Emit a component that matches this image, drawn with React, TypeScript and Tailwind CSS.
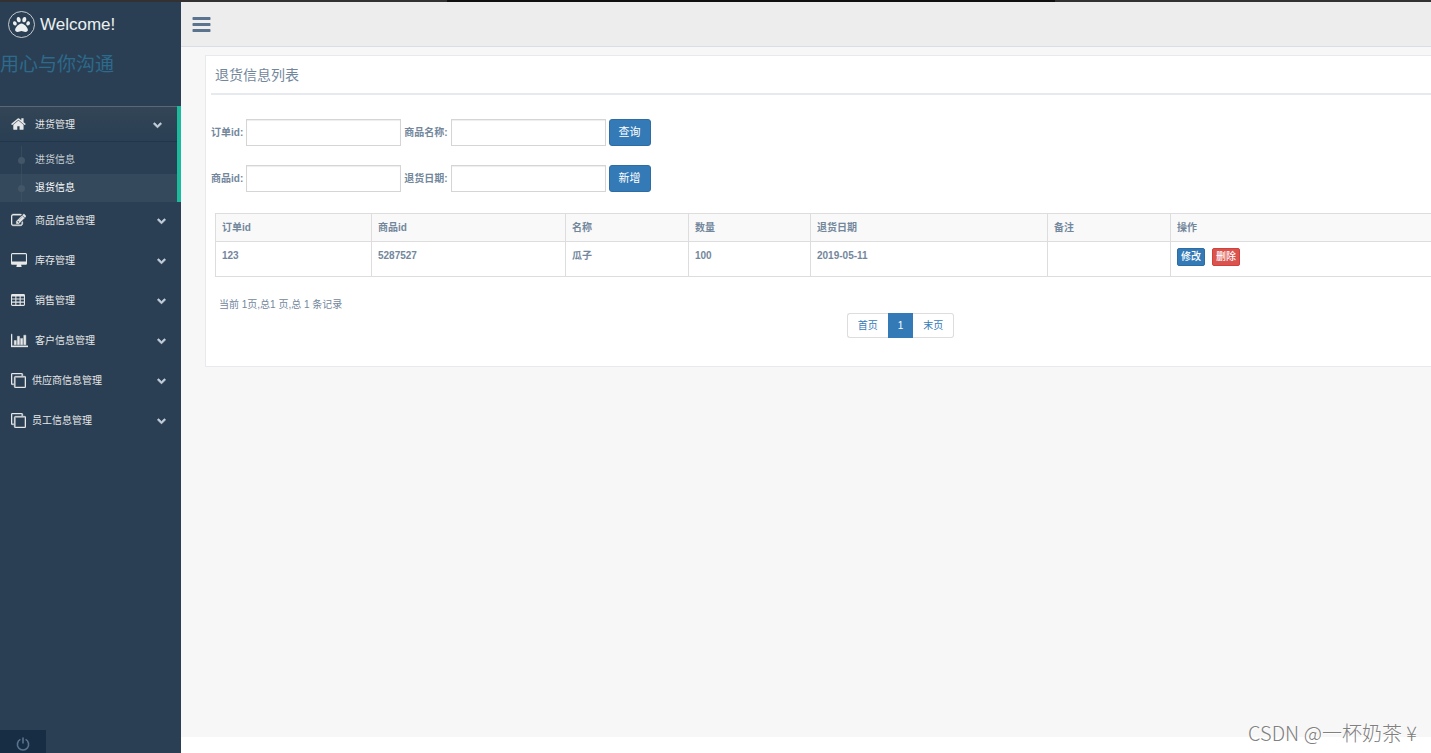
import { FaPaw } from "react-icons/fa";

const paths = {
  home: "M1408 992v480q0 26-19 45t-45 19h-384v-384h-256v384h-384q-26 0-45-19t-19-45v-480q0-1 .5-3t.5-3l575-474 575 474q1 2 1 6zm223-69l-62 74q-8 9-21 11h-3q-13 0-21-7l-692-577-692 577q-12 8-24 7-13-2-21-11l-62-74q-8-10-7-23.5t11-21.5l719-599q32-26 76-26t76 26l244 204v-195q0-14 9-23t23-9h192q14 0 23 9t9 23v408l219 182q10 8 11 21.5t-7 23.5z",
  edit: "M888 1184l116-116-152-152-116 116v56h96v96h56zm440-720q-16-16-33 1l-350 350q-17 17-1 33t33-1l350-350q17-17 1-33zm80 594v190q0 119-84.5 203.5t-203.5 84.5h-832q-119 0-203.5-84.5t-84.5-203.5v-832q0-119 84.5-203.5t203.5-84.5h832q63 0 117 25 15 7 18 23 3 17-9 29l-49 49q-14 14-32 8-23-6-45-6h-832q-66 0-113 47t-47 113v832q0 66 47 113t113 47h832q66 0 113-47t47-113v-126q0-13 9-22l64-64q15-15 35-7t20 29zm-96-738l288 288-672 672h-288v-288zm444 132l-92 92-288-288 92-92q28-28 68-28t68 28l152 152q28 28 28 68t-28 68z",
  desktop: "M1792 992v-832q0-13-9.5-22.5t-22.5-9.5h-1600q-13 0-22.5 9.5t-9.5 22.5v832q0 13 9.5 22.5t22.5 9.5h1600q13 0 22.5-9.5t9.5-22.5zm128-832v1088q0 66-47 113t-113 47h-544q0 37 16 77.5t32 71 16 43.5q0 26-19 45t-45 19h-512q-26 0-45-19t-19-45q0-14 16-44t32-70 16-78h-544q-66 0-113-47t-47-113v-1088q0-66 47-113t113-47h1600q66 0 113 47t47 113z",
  table: "M160 128h1344q160 0 160 160v1088q0 160-160 160h-1344q-160 0-160-160v-1088q0-160 160-160zM128 416v224h384v-224zM640 416v224h384v-224zM1152 416v224h384v-224zM128 768v256h384v-256zM640 768v256h384v-256zM1152 768v256h384v-256zM128 1152v256h384v-256zM640 1152v256h384v-256zM1152 1152v256h384v-256z",
  chart: "M640 896v512h-256v-512h256zm384-512v1024h-256v-1024h256zm1024 1152v128h-2048v-1536h128v1408h1920zm-640-896v768h-256v-768h256zm384-384v1152h-256v-1152h256z",
  clone: "M1664 1632v-1088q0-13-9.5-22.5t-22.5-9.5h-1088q-13 0-22.5 9.5t-9.5 22.5v1088q0 13 9.5 22.5t22.5 9.5h1088q13 0 22.5-9.5t9.5-22.5zm128-1088v1088q0 66-47 113t-113 47h-1088q-66 0-113-47t-47-113v-1088q0-66 47-113t113-47h1088q66 0 113 47t47 113zm-384-384v160h-128v-160q0-13-9.5-22.5t-22.5-9.5h-1088q-13 0-22.5 9.5t-9.5 22.5v1088q0 13 9.5 22.5t22.5 9.5h160v128h-160q-66 0-113-47t-47-113v-1088q0-66 47-113t113-47h1088q66 0 113 47t47 113z",
  chevron: "M1683 808l-742 741q-19 19-45 19t-45-19l-742-741q-19-19-19-45.5t19-45.5l166-165q19-19 45-19t45 19l531 531 531-531q19-19 45-19t45 19l166 165q19 19 19 45.5t-19 45.5z",
  bars: "M1664 1344v128q0 26-19 45t-45 19h-1408q-26 0-45-19t-19-45v-128q0-26 19-45t45-19h1408q26 0 45 19t19 45zm0-512v128q0 26-19 45t-45 19h-1408q-26 0-45-19t-19-45v-128q0-26 19-45t45-19h1408q26 0 45 19t19 45zm0-512v128q0 26-19 45t-45 19h-1408q-26 0-45-19t-19-45v-128q0-26 19-45t45-19h1408q26 0 45 19t19 45z",
};

type IconName = keyof typeof paths;

const menu: { label: string; icon: IconName; box: string; iconClass: string; iconCell: string }[] = [
  { label: "商品信息管理", icon: "edit", box: "0 0 1792 1792", iconClass: "w-[15px] h-[15px] stroke-current stroke-[50]", iconCell: "w-6" },
  { label: "库存管理", icon: "desktop", box: "0 0 1920 1664", iconClass: "w-4 h-[14px]", iconCell: "w-6" },
  { label: "销售管理", icon: "table", box: "0 0 1664 1664", iconClass: "w-[14px] h-[14px]", iconCell: "w-6" },
  { label: "客户信息管理", icon: "chart", box: "0 0 2048 1792", iconClass: "w-[17px] h-[15px] stroke-current stroke-[50]", iconCell: "w-6" },
  { label: "供应商信息管理", icon: "clone", box: "0 0 1792 1792", iconClass: "w-[15px] h-[15px] stroke-current stroke-[50]", iconCell: "w-[21px]" },
  { label: "员工信息管理", icon: "clone", box: "0 0 1792 1792", iconClass: "w-[15px] h-[15px] stroke-current stroke-[50]", iconCell: "w-[21px]" },
];

const subMenu = [
  { label: "进货信息", current: false },
  { label: "退货信息", current: true },
];

const columns = [
  { title: "订单id", width: "w-[156px]" },
  { title: "商品id", width: "w-[194px]" },
  { title: "名称", width: "w-[123px]" },
  { title: "数量", width: "w-[122px]" },
  { title: "退货日期", width: "w-[237px]" },
  { title: "备注", width: "w-[123px]" },
  { title: "操作", width: "" },
];

const rows = [["123", "5287527", "瓜子", "100", "2019-05-11", ""]];

function Icon({ name, box = "0 0 1792 1792", className }: { name: IconName; box?: string; className: string }) {
  return (
    <svg viewBox={box} className={className} fill="currentColor" fillRule="evenodd" aria-hidden="true">
      <path d={paths[name]} />
    </svg>
  );
}

function Chevron() {
  return <Icon name="chevron" className="mt-px h-[9px] w-[9px] stroke-current stroke-[120] text-[#C4CFDA]" />;
}

function Sidebar() {
  return (
    <aside className="flex w-[181px] shrink-0 flex-col bg-[#2A3F54] text-[#E7E7E7]">
      <a href="#" className="flex h-11 items-center gap-[5px] pl-2 text-[17px] text-[#ECF0F1]">
        <span className="flex h-[27px] w-[27px] items-center justify-center rounded-full border border-[#EAEAEA]/80">
          <FaPaw className="h-[17px] w-[17px]" />
        </span>
        Welcome!
      </a>
      <h2 className="h-[60px] pt-1 text-[19px] leading-[30px] text-[#2D6A8B]">用心与你沟通</h2>

      <nav className="grow">
        <div className="border-r-4 border-[#1ABB9C]">
          <a
            href="#"
            className="flex h-9 items-center bg-linear-to-b from-[#334556] to-[#2A3F54] pl-[11px] pr-[15px] shadow-[inset_0_1px_0_#586879,inset_0_-1px_0_#22364A]"
          >
            <span className="w-6">
              <Icon name="home" className="h-4 w-4" />
            </span>
            <span className="grow">进货管理</span>
            <Chevron />
          </a>
          <ul className="pt-1">
            {subMenu.map((item) => (
              <li key={item.label}>
                <a
                  href="#"
                  className={
                    item.current
                      ? "flex h-7 items-center bg-[#35495D] text-white"
                      : "flex h-7 items-center text-white/75"
                  }
                >
                  <span className="flex w-[35px] items-center self-stretch pl-[18px]">
                    <span className="flex h-full w-[7px] items-center justify-center bg-linear-to-r from-transparent from-43% via-[#425668] via-43% to-transparent to-57%">
                      <span className="h-[7px] w-[7px] rounded-full bg-[#425668]" />
                    </span>
                  </span>
                  <span className="pb-[2px]">{item.label}</span>
                </a>
              </li>
            ))}
          </ul>
        </div>

        <ul className="flex flex-col gap-1">
          {menu.map((item) => (
            <li key={item.label}>
              <a href="#" className="flex h-9 items-center pl-[11px] pr-[15px]">
                <span className={item.iconCell}>
                  <Icon name={item.icon} box={item.box} className={item.iconClass} />
                </span>
                <span className="grow">{item.label}</span>
                <Chevron />
              </a>
            </li>
          ))}
        </ul>
      </nav>

      <button
        type="button"
        aria-label="退出"
        className="flex h-[23px] w-[46px] items-end justify-center bg-[#172D44] pb-[2px] text-[#5A738E]"
      >
        <svg viewBox="0 0 14 14" className="h-[14px] w-[14px]" fill="none" stroke="currentColor" strokeWidth="1.6" aria-hidden="true">
          <path d="M4.4 2.4A5.6 5.6 0 1 0 9.6 2.4M7 .5v6" />
        </svg>
      </button>
    </aside>
  );
}

function Field({ id, label }: { id: string; label: string }) {
  return (
    <>
      <label htmlFor={id} className="font-bold">
        {label}
      </label>
      <input id={id} type="text" className="h-[27px] w-[155px] border border-[#D5D5D5] bg-white px-1 shadow-[inset_0_1px_1px_#EEEEEE]" />
    </>
  );
}

function SearchForm() {
  return (
    <form className="flex flex-col gap-[19px] pt-6">
      <div className="flex items-center gap-[3px]">
        <Field id="orderId" label="订单id:" />
        <Field id="goodsName" label="商品名称:" />
        <button type="button" className="h-[27px] w-[42px] rounded-[3px] border border-[#2E6DA4] bg-[#337AB7] text-[11px] text-white">
          查询
        </button>
      </div>
      <div className="flex items-center gap-[3px]">
        <Field id="goodsId" label="商品id:" />
        <Field id="returnDate" label="退货日期:" />
        <button type="button" className="h-[27px] w-[42px] rounded-[3px] border border-[#2E6DA4] bg-[#337AB7] text-[11px] text-white">
          新增
        </button>
      </div>
    </form>
  );
}

function ReturnTable() {
  return (
    <table className="w-full table-fixed border-collapse text-left font-bold">
      <thead>
        <tr className="h-7 bg-[#F9F9F9]">
          {columns.map((col) => (
            <th key={col.title} className={`${col.width} border border-[#DDDDDD] px-[6px]`}>
              {col.title}
            </th>
          ))}
        </tr>
      </thead>
      <tbody>
        {rows.map((row) => (
          <tr key={row[0]} className="h-[35px] align-top">
            {row.map((cell, i) => (
              <td key={i} className="border border-[#DDDDDD] px-[6px] pt-[6px]">
                {cell}
              </td>
            ))}
            <td className="border border-[#DDDDDD] px-[6px] pt-[6px]">
              <div className="flex gap-[7px]">
                <button type="button" className="h-[18px] rounded-[2px] border border-[#2E6DA4] bg-[#337AB7] px-[3px] leading-4 font-medium text-white">
                  修改
                </button>
                <button type="button" className="h-[18px] rounded-[2px] border border-[#D43F3A] bg-[#D9534F] px-[3px] leading-4 font-medium text-white">
                  删除
                </button>
              </div>
            </td>
          </tr>
        ))}
      </tbody>
    </table>
  );
}

function Pagination() {
  return (
    <nav className="flex justify-center leading-[23px] text-[#337AB7]">
      <a href="#" className="rounded-l-[3px] border border-r-0 border-[#DDDDDD] px-[10px]">
        首页
      </a>
      <a href="#" className="border-y border-[#337AB7] bg-[#337AB7] px-[10px] text-white">
        1
      </a>
      <a href="#" className="rounded-r-[3px] border border-l-0 border-[#DDDDDD] px-[10px]">
        末页
      </a>
    </nav>
  );
}

export default function App() {
  return (
    <div className="relative flex min-h-screen flex-col overflow-hidden bg-white font-['Liberation_Sans','Noto_Sans_CJK_SC',sans-serif] text-[10px] leading-[15px] text-[#73879C]">
      <div className="flex h-[2px] justify-center bg-[#333132] pr-[5%] pl-[10%]">
        <div className="w-1/2 bg-[#110F10]" />
      </div>

      <div className="flex grow">
        <Sidebar />
        <div className="flex min-w-0 grow flex-col overflow-hidden">
          <header className="flex h-[45px] shrink-0 items-center border-b border-[#D9DEE4] bg-[#EDEDED] pl-[10px]">
            <button type="button" aria-label="菜单" className="text-[#5A738E]">
              <Icon name="bars" className="h-[21px] w-[21px]" />
            </button>
          </header>

          <main className="mb-4 grow bg-[#F7F7F7] pt-2 pl-6">
            {/* the panel is wider than the window and is cut off on the right */}
            <section className="w-[calc(100%+165px)] border border-[#E6E9ED] bg-white px-[5px] pb-7">
              <h2 className="border-b-2 border-[#E6E9ED] px-1 pt-1 pb-[3px] text-[14px] leading-[30px]">退货信息列表</h2>
              <SearchForm />
              <div className="px-1 pt-[21px] pb-px">
                <ReturnTable />
                <p className="px-1 pt-5">当前 1页,总1 页,总 1 条记录</p>
              </div>
              <Pagination />
            </section>
          </main>
        </div>
      </div>

      <div className="absolute right-[14px] bottom-1 font-['Noto_Sans_CJK_SC',sans-serif] text-[20px] leading-8 font-light text-[#808080] [text-shadow:1px_1px_0_#ffffff]">
        CSDN @一杯奶茶 ¥
      </div>
    </div>
  );
}
